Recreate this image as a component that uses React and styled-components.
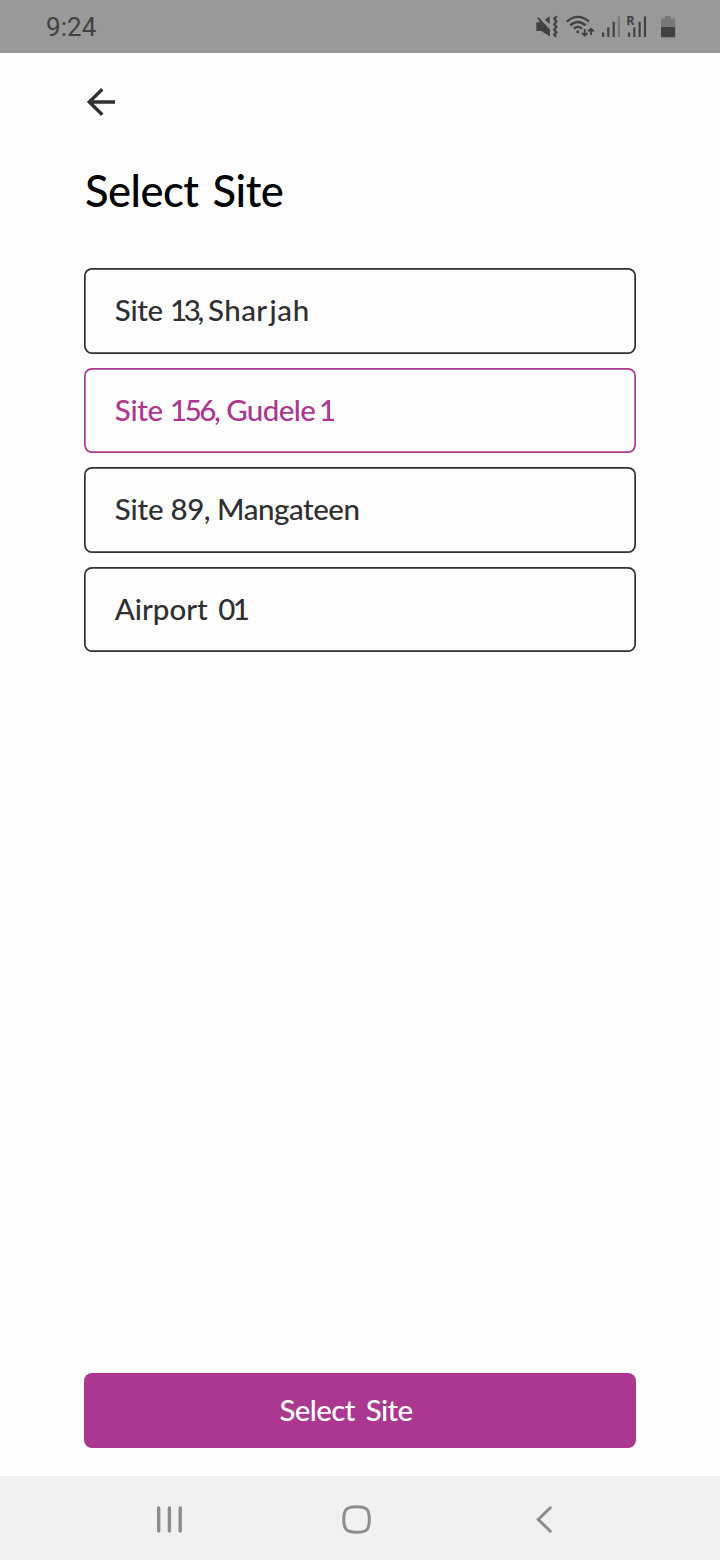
import React from "react";
import styled, { createGlobalStyle } from "styled-components";

const GlobalStyle = createGlobalStyle`
  * { box-sizing: border-box; }
  body { margin: 0; background: #fff; }
  svg { display: block; flex: none; overflow: visible; }
`;

const Screen = styled.div`
  display: flex;
  flex-direction: column;
  width: 720px;
  height: 1560px;
  background: #fefefe;
  font-family: Lato, "Open Sans", sans-serif;
  font-weight: 500;
`;

const StatusBar = styled.header`
  display: flex;
  align-items: center;
  justify-content: space-between;
  height: 53px;
  padding: 0 44px 0 46px;
  background: #999;
  color: #414141;
`;

const Clock = styled.time`
  padding-top: 2px;
  font: 400 26px/53px Roboto, sans-serif;
  letter-spacing: 0.1px;
`;

const StatusIcons = styled.div`
  display: flex;
  align-items: flex-start;
  height: 26px;
`;

const Content = styled.main`
  display: flex;
  flex: 1;
  flex-direction: column;
  padding: 32px 84px 28px;
`;

const PlainButton = styled.button`
  padding: 0;
  border: 0;
  background: none;
  font: inherit;
  cursor: pointer;
`;

const BackButton = styled(PlainButton)`
  width: 34px;
  height: 34px;
`;

const Title = styled.h1`
  margin: 44px 0 50px 1px;
  font-size: 43.5px;
  font-weight: 500;
  line-height: 55px;
  letter-spacing: -0.5px;
  word-spacing: 3.5px;
  color: #000;
  white-space: nowrap;
`;

const SiteList = styled.div`
  display: flex;
  flex-direction: column;
  gap: 14px;
`;

const SiteOption = styled(PlainButton)`
  height: 85.6px;
  padding: 0 30.8px 1.4px;
  border-radius: 8px;
  box-shadow: inset 0 0 0 1.7px currentColor;
  color: ${({ $selected }) => ($selected ? "#ab3791" : "#303032")};
  font-size: 29.5px;
  line-height: 40px;
  text-align: left;
  white-space: pre;
`;

const Tracked = styled.span`
  letter-spacing: ${({ $spacing }) => $spacing}px;
`;

const SubmitButton = styled(PlainButton)`
  height: 75px;
  margin-top: auto;
  padding: 0 28px 2px 0;
  border-radius: 8px;
  background: #ab3791;
  color: #fff;
  font-size: 29.5px;
  letter-spacing: -0.6px;
  word-spacing: 4px;
`;

const NavBar = styled.nav`
  display: flex;
  align-items: center;
  justify-content: space-between;
  height: 84px;
  padding: 3px 167px 0 156px;
  background: #f1f1f1;
  color: #8c8c8c;
`;

const MutedIcon = () => (
  <svg width="30" height="26" viewBox="535 14 30 26" fill="currentColor">
    <path d="M536.3 22.3H540L537.2 18.2L538.3 17L550 29.5V36.5L541.3 31H536.3ZM544.8 19.7L549.6 16.2V24Z" />
    <path d="M557 16.2L554.2 18.7L556.5 21.5L554.2 24.2L556.5 27L554.2 29.8L556.5 32.5L554.2 34.5L556 36.8" fill="none" stroke="currentColor" strokeWidth="2.2" />
  </svg>
);

const WifiIcon = () => (
  <svg width="36" height="26" viewBox="565 14 36 26" fill="none" stroke="currentColor" strokeWidth="2.2">
    <path d="M566.8 21.6Q577.8 12 589 21.6M570.2 25.4Q577.8 18.6 585.5 25.4M573.8 28.7Q577.8 25.2 582 28.7" />
    <circle cx="577.8" cy="31.8" r="1.5" fill="currentColor" stroke="none" />
    <path d="M584.7 29V35.7M581.9 32.9L584.7 35.7L587.5 32.9M591 35V28.8M588.2 31.5L591 28.7L593.8 31.5" strokeWidth="1.8" />
  </svg>
);

const SignalIcon = () => (
  <svg width="25" height="26" viewBox="601 14 25 26" fill="currentColor">
    <path d="M602 32.5h2.2V37h-2.2zM607.2 27.3h2.2V37h-2.2zM612.6 21.8h2.2V37h-2.2z" />
    <path opacity=".38" d="M617.8 16.5h2.2V37h-2.2z" />
  </svg>
);

const RoamingIcon = () => (
  <svg width="34" height="26" viewBox="626 14 34 26" fill="currentColor">
    <path d="M628 32.5h2.2V37h-2.2zM633.2 27.3h2.2V37h-2.2zM638.5 21.8h2.2V37h-2.2zM643.9 16.5h2.2V37h-2.2z" />
    <text x="626.3" y="24.5" fontFamily="Open Sans, sans-serif" fontWeight="700" fontSize="12.6">R</text>
  </svg>
);

const BatteryIcon = () => (
  <svg width="16" height="26" viewBox="660 14 16 26" fill="currentColor">
    <path opacity=".38" d="M664.5 16H671V18.5H674.2Q675.2 18.5 675.2 19.5V27H661V19.5Q661 18.5 662 18.5H664.5Z" />
    <path d="M661 27H675.2V36.2Q675.2 37.2 674.2 37.2H662Q661 37.2 661 36.2Z" />
  </svg>
);

const ArrowIcon = () => (
  <svg width="34" height="34" viewBox="84 85 34 34" fill="none" stroke="#303032" strokeWidth="3.4">
    <path d="M115 102H90M102.3 89.3L89.3 102L102.3 114.8" />
  </svg>
);

const RecentsIcon = () => (
  <svg width="27" height="27" viewBox="156 1506 27 27" fill="none" stroke="currentColor" strokeWidth="3.4" strokeLinecap="round">
    <path d="M158.7 1508V1531M169.4 1508V1531M180.2 1508V1531" />
  </svg>
);

const HomeIcon = () => (
  <svg width="30" height="30" viewBox="345 1505 30 30" fill="none" stroke="currentColor" strokeWidth="3">
    <path d="M356.6 1506.7C366.8 1506.7 369.3 1509.2 369.3 1519.5S366.8 1532.2 356.6 1532.2S343.8 1529.7 343.8 1519.5S346.4 1506.7 356.6 1506.7Z" />
  </svg>
);

const ReturnIcon = () => (
  <svg width="17" height="28" viewBox="536 1506 17 28" fill="none" stroke="currentColor" strokeWidth="3" strokeLinecap="round">
    <path d="M550.3 1507.8L538.3 1519.5L550.3 1531.2" />
  </svg>
);

/* Each part of a name carries its own tracking. */
const sites = [
  [["Site ", -0.3], ["13", -3.4], [",", -1.6], [" ", -2], ["Sha", 0.4], ["r", 2.4], ["jah", 0.6]],
  [["Site ", -0.3], ["156", -2.5], [",", -1], [" ", -1], ["Gudele", -0.6], [" ", -3.6], ["1", 0]],
  [["Site ", -0.2], ["89, ", -0.5], ["Mangateen", -0.45]],
  [["Airport", 0], [" ", 3], ["01", -2.5]],
];

export default function App() {
  const [selected, setSelected] = React.useState(1);
  return (
    <>
      <GlobalStyle />
      <Screen>
        <StatusBar>
          <Clock>9:24</Clock>
          <StatusIcons>
            <MutedIcon />
            <WifiIcon />
            <SignalIcon />
            <RoamingIcon />
            <BatteryIcon />
          </StatusIcons>
        </StatusBar>
        <Content>
          <BackButton aria-label="Back"><ArrowIcon /></BackButton>
          <Title>Select Site</Title>
          <SiteList>
            {sites.map((parts, index) => (
              <SiteOption
                key={index}
                $selected={index === selected}
                onClick={() => setSelected(index)}
              >
                {parts.map(([text, spacing], part) => (
                  <Tracked key={part} $spacing={spacing}>{text}</Tracked>
                ))}
              </SiteOption>
            ))}
          </SiteList>
          <SubmitButton>Select Site</SubmitButton>
        </Content>
        <NavBar>
          <RecentsIcon />
          <HomeIcon />
          <ReturnIcon />
        </NavBar>
      </Screen>
    </>
  );
}
